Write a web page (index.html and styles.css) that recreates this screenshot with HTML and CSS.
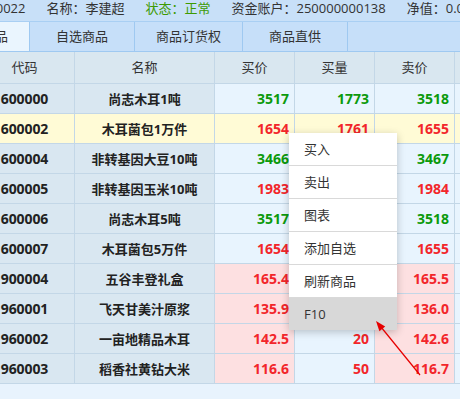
FILE: index.html
```html
<!DOCTYPE html>
<html lang="zh-CN">
<head>
<meta charset="utf-8">
<title>商品行情</title>
<link rel="stylesheet" href="styles.css">
</head>
<body>
<div class="screen">
  <div class="topbar">
    <span class="acct">10000022</span>
    <span>名称：李建超</span>
    <span class="ok">状态：正常</span>
    <span>资金账户：250000000138</span>
    <span>净值：0.00</span>
  </div>
  <div class="tabs">
    <div class="tab first active">全部交易品</div>
    <div class="tab">自选商品</div>
    <div class="tab">商品订货权</div>
    <div class="tab">商品直供</div>
    <div class="tab-fill"></div>
  </div>
  <div class="grid">
    <div class="row head">
      <div class="c">代码</div><div class="c">名称</div><div class="c">买价</div><div class="c">买量</div><div class="c">卖价</div><div class="c"></div>
    </div>
    <div class="row">
      <div class="c code">600000</div><div class="c name">尚志木耳1吨</div><div class="c num g">3517</div><div class="c num g">1773</div><div class="c num g">3518</div><div class="c num"></div>
    </div>
    <div class="row sel">
      <div class="c code">600002</div><div class="c name">木耳菌包1万件</div><div class="c num r">1654</div><div class="c num r">1761</div><div class="c num r">1655</div><div class="c num"></div>
    </div>
    <div class="row">
      <div class="c code">600004</div><div class="c name">非转基因大豆10吨</div><div class="c num g">3466</div><div class="c num g"></div><div class="c num g">3467</div><div class="c num"></div>
    </div>
    <div class="row">
      <div class="c code">600005</div><div class="c name">非转基因玉米10吨</div><div class="c num r">1983</div><div class="c num r"></div><div class="c num r">1984</div><div class="c num"></div>
    </div>
    <div class="row">
      <div class="c code">600006</div><div class="c name">尚志木耳5吨</div><div class="c num g">3517</div><div class="c num g"></div><div class="c num g">3518</div><div class="c num"></div>
    </div>
    <div class="row">
      <div class="c code">600007</div><div class="c name">木耳菌包5万件</div><div class="c num r">1654</div><div class="c num r"></div><div class="c num r">1655</div><div class="c num"></div>
    </div>
    <div class="row">
      <div class="c code">900004</div><div class="c name">五谷丰登礼盒</div><div class="c num r pk">165.4</div><div class="c num r"></div><div class="c num r pk">165.5</div><div class="c num"></div>
    </div>
    <div class="row">
      <div class="c code">960001</div><div class="c name">飞天甘美汁原浆</div><div class="c num r pk">135.9</div><div class="c num r"></div><div class="c num r pk">136.0</div><div class="c num"></div>
    </div>
    <div class="row">
      <div class="c code">960002</div><div class="c name">一亩地精品木耳</div><div class="c num r pk">142.5</div><div class="c num r">20</div><div class="c num r pk">142.6</div><div class="c num"></div>
    </div>
    <div class="row">
      <div class="c code">960003</div><div class="c name">稻香社黄钻大米</div><div class="c num r pk">116.6</div><div class="c num r">50</div><div class="c num r pk">116.7</div><div class="c num"></div>
    </div>
  </div>

  <ul class="menu">
    <li>买入</li>
    <li>卖出</li>
    <li>图表</li>
    <li>添加自选</li>
    <li>刷新商品</li>
    <li class="hover">F10</li>
  </ul>

  <svg class="arrow" width="460" height="399" viewBox="0 0 460 399">
    <line x1="420" y1="375" x2="381" y2="327" stroke="#e60000" stroke-width="1.2"/>
    <polygon points="376,321 385.2,326.4 379.4,331.2" fill="#e60000"/>
  </svg>
</div>
</body>
</html>
```

FILE: styles.css
```css
html, body {
  margin: 0;
  padding: 0;
}
body {
  background: #e8f3fd;
  overflow: hidden;
  font-family: "Open Sans", "Noto Sans CJK SC", sans-serif;
  color: #333;
}
.screen {
  position: relative;
  width: 460px;
  height: 399px;
  overflow: hidden;
  background: #e8f3fd;
}
.topbar {
  display: flex;
  gap: 21px;
  height: 21px;
  border-bottom: 1px solid #a9cff3;
  background: #c8e0f8;
  font-size: 13px;
  line-height: 16px;
  white-space: nowrap;
  color: #333;
}
.topbar span {
  flex: none;
}
.topbar .acct {
  margin-left: -34px;
}
.topbar .ok {
  color: #3d9a00;
}
.tabs {
  display: flex;
  height: 29px;
  border-bottom: 1px solid #9fc9f1;
  background: #c6dff9;
  font-size: 13px;
  line-height: 29px;
  white-space: nowrap;
}
.tab {
  flex: none;
  box-sizing: border-box;
  min-width: 105px;
  padding: 0 21px;
  text-align: center;
  border-right: 1px solid #9fc9f1;
  color: #333;
}
.tab.first {
  margin-left: -78px;
}
.tab.active {
  background: #eaf5fe;
}
.tab-fill {
  flex: 1;
}
.grid {
  margin-left: -25px;
  display: flex;
  flex-direction: column;
}
.row {
  display: grid;
  grid-template-columns: 100px 140px 80px 80px 80px 80px;
  height: 30px;
}
.c {
  box-sizing: border-box;
  border-right: 1px solid #c3d7e7;
  border-bottom: 1px solid #c3d7e7;
  background: #e8f4fe;
  white-space: nowrap;
  overflow: hidden;
  line-height: 30px;
}
.row.head {
  height: 32px;
}
.row.head .c {
  background: #d9e7f0;
  text-align: center;
  font-size: 13px;
  line-height: 31px;
  color: #333;
}
.code, .name {
  background: #d9e7f1;
  text-align: center;
  font-weight: 700;
  color: #222;
}
.code {
  font-size: 14px;
  letter-spacing: -0.1px;
}
.name {
  font-size: 13px;
}
.num {
  text-align: right;
  padding-right: 5px;
  font-size: 14px;
  font-weight: 700;
}
.g {
  color: #0c9a0c;
}
.r {
  color: #f2262a;
}
.pk {
  background: #fde0e1;
}
.row.sel .c {
  background: #fffbd6;
}
.menu {
  position: absolute;
  left: 289px;
  top: 133px;
  width: 108px;
  margin: 0;
  padding: 0;
  list-style: none;
  background: #fff;
  box-shadow: 0 2px 8px rgba(0, 0, 0, 0.22);
  font-size: 13px;
  color: #333;
}
.menu li {
  height: 32px;
  line-height: 32px;
  padding-left: 15px;
  border-bottom: 1px solid #d9d9d9;
}
.menu li:last-child {
  border-bottom: 0;
}
.menu li.hover {
  background: #d8d8d8;
}
.arrow {
  position: absolute;
  left: 0;
  top: 0;
  pointer-events: none;
}
```
